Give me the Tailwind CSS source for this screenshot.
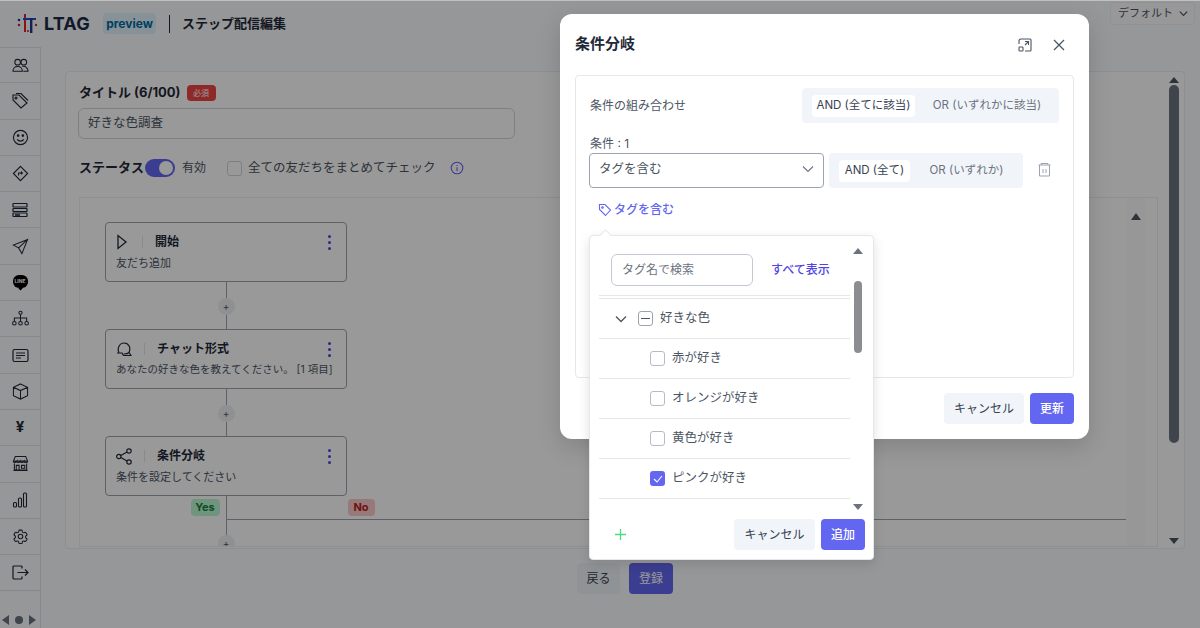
<!DOCTYPE html>
<html lang="ja">
<head>
  <meta charset="UTF-8" />
  <title>ステップ配信編集</title>
  <script src="https://cdn.jsdelivr.net/npm/@tailwindcss/browser@4"></script>
</head>
<body class="font-['Inter','Noto_Sans_CJK_JP',sans-serif] text-[#374151]">
<div class="relative w-[1200px] h-[628px] overflow-hidden bg-[#fbfcfd]">

  <!-- header -->
  <header class="h-[47px] flex items-center pl-[17px] pr-[5px]">
    <svg width="21" height="21" viewBox="0 0 21 21" class="mr-[6px]">
      <circle cx="2" cy="7" r="1.3" fill="#1e3a8a"/><circle cx="2" cy="12" r="1.3" fill="#e11d48"/>
      <rect x="7" y="1" width="2" height="18" fill="#dc2626"/>
      <rect x="6" y="5" width="13" height="2" fill="#1d4ed8"/>
      <rect x="13" y="5" width="2.4" height="15" fill="#1e3a8a"/>
      <circle cx="19" cy="12" r="1.2" fill="#dc2626"/><circle cx="11" cy="18" r="1.1" fill="#dc2626"/>
    </svg>
    <span class="text-[18px] font-bold text-[#1e2a4a] w-[59px] tracking-[0.2px]">LTAG</span>
    <span class="w-[53px] h-[21px] flex items-center justify-center bg-[#e0f2fe] rounded text-[12px] font-bold text-[#0369a1]">preview</span>
    <span class="w-px h-[18px] bg-[#1f2937] ml-[13px] mr-[12px]"></span>
    <span class="text-[13px] font-bold text-[#1f2937]">ステップ配信編集</span>
    <div class="ml-auto w-[85px] h-[23px] mb-[21px] border border-[#f1f2f4] rounded flex items-center pl-[7px] gap-[5px] text-[11px] text-[#4b5563] bg-[#fdfdfd]">
      デフォルト
      <svg width="11" height="11" viewBox="0 0 12 12" fill="none" stroke="#4b5563" stroke-width="1.4"><path d="M2 4l4 4 4-4"/></svg>
    </div>
  </header>

  <div class="flex">
    <!-- sidebar -->
    <aside class="w-[41px] h-[581px] border-r border-[#e0e3e7] flex flex-col">
      <div class="h-[36.3px] flex items-center justify-center border-y border-[#e0e3e7]">
        <svg width="17" height="17" viewBox="0 0 18 18" fill="none" stroke="#1f2937" stroke-width="1.1"><circle cx="6" cy="5.5" r="3"/><circle cx="12.5" cy="5.5" r="3"/><path d="M1 15c0-3 2-5 5-5s5 2 5 5zM11 10c3-.6 6 1.500 6 5h-5"/></svg>
      </div>
      <div class="h-[36.3px] flex items-center justify-center border-b border-[#e0e3e7]">
        <svg width="18" height="18" viewBox="0 0 18 18" fill="none" stroke="#1f2937" stroke-width="1.1"><path d="M2 3h6l8 8-6 5-8-8zM5 1.500h5l7 7"/><circle cx="5" cy="6" r="1"/></svg>
      </div>
      <div class="h-[36.3px] flex items-center justify-center border-b border-[#e0e3e7]">
        <svg width="17" height="17" viewBox="0 0 18 18" fill="none" stroke="#1f2937" stroke-width="1.2"><circle cx="9" cy="9" r="7.500"/><circle cx="6.500" cy="7" r=".8" fill="#1f2937"/><circle cx="11.500" cy="7" r=".8" fill="#1f2937"/><path d="M5.500 11c1.500 2.500 5.500 2.500 7 0"/></svg>
      </div>
      <div class="h-[36.3px] flex items-center justify-center border-b border-[#e0e3e7]">
        <svg width="17" height="17" viewBox="0 0 18 18" fill="none" stroke="#1f2937" stroke-width="1.2"><path d="M9 1.500L16.500 9 9 16.500 1.500 9z"/><path d="M7 11V8.500h4M9.500 7l1.500 1.500L9.500 10"/></svg>
      </div>
      <div class="h-[36.3px] flex items-center justify-center border-b border-[#e0e3e7]">
        <svg width="16" height="16" viewBox="0 0 16 16" fill="none" stroke="#1f2937" stroke-width="1.2"><rect x="1" y="1.500" width="14" height="3.500" rx=".5"/><rect x="1" y="6.500" width="14" height="3" rx=".5"/><rect x="1" y="11" width="14" height="3.500" rx=".5"/><path d="M3 13h5" stroke-width="1.600"/></svg>
      </div>
      <div class="h-[36.3px] flex items-center justify-center border-b border-[#e0e3e7]">
        <svg width="17" height="17" viewBox="0 0 18 18" fill="none" stroke="#1f2937" stroke-width="1.1"><path d="M16.500 1.500L1.500 7.500l5.500 3 3.500 6zM7 10.500l9.500-9"/></svg>
      </div>
      <div class="h-[36.3px] flex items-center justify-center border-b border-[#e0e3e7]">
        <div class="relative w-[15px] h-[13px] mb-[2px] rounded-[6px] bg-black flex items-center justify-center text-[5px] font-bold text-white leading-none">LINE<span class="absolute -bottom-[2px] left-[6px] w-[3px] h-[3px] bg-black rotate-45"></span></div>
      </div>
      <div class="h-[36.3px] flex items-center justify-center border-b border-[#e0e3e7]">
        <svg width="17" height="17" viewBox="0 0 18 18" fill="none" stroke="#1f2937" stroke-width="1.1"><circle cx="9" cy="3" r="1.700"/><circle cx="2.500" cy="14" r="1.900"/><circle cx="9" cy="14" r="1.900"/><circle cx="15.500" cy="14" r="1.900"/><path d="M9 5v7M2.500 12V8.500h13V12"/></svg>
      </div>
      <div class="h-[36.3px] flex items-center justify-center border-b border-[#e0e3e7]">
        <svg width="17" height="15" viewBox="0 0 17 15" fill="none" stroke="#1f2937" stroke-width="1.2"><rect x="1" y="1.500" width="15" height="12" rx="1.500"/><path d="M4 5h9M4 7.500h9M4 10h5"/></svg>
      </div>
      <div class="h-[36.3px] flex items-center justify-center border-b border-[#e0e3e7]">
        <svg width="17" height="17" viewBox="0 0 18 18" fill="none" stroke="#1f2937" stroke-width="1.1"><path d="M9 1l7.500 3.500v9L9 17l-7.500-3.500v-9zM1.500 4.500L9 8l7.500-3.500M9 8v9"/></svg>
      </div>
      <div class="h-[36.3px] flex items-center justify-center border-b border-[#e0e3e7] text-[15px] font-bold text-[#1f2937]">¥</div>
      <div class="h-[36.3px] flex items-center justify-center border-b border-[#e0e3e7]">
        <svg width="17" height="17" viewBox="0 0 18 18" fill="none" stroke="#1f2937" stroke-width="1.1"><path d="M3.500 1.500h11l2 5H1.500zM1.500 6.500c0 2 2.500 2 3.750 0 0 2 2.500 2 3.750 0 0 2 2.500 2 3.750 0 0 2 3.750 2 3.750 0M2.500 9v7h13V9M4.500 16v-5h3v5M10 11h3.500v3H10zM1.500 16.500h15"/></svg>
      </div>
      <div class="h-[36.3px] flex items-center justify-center border-b border-[#e0e3e7]">
        <svg width="16" height="16" viewBox="0 0 16 16" fill="none" stroke="#1f2937" stroke-width="1.1"><rect x="1.500" y="10.500" width="3" height="4.500" rx="1"/><rect x="6.500" y="6" width="3" height="9" rx="1"/><rect x="11.500" y="1" width="3" height="14" rx="1"/></svg>
      </div>
      <div class="h-[36.3px] flex items-center justify-center border-b border-[#e0e3e7]">
        <svg width="17" height="17" viewBox="0 0 24 24" fill="none" stroke="#1f2937" stroke-width="1.500"><path d="M9.600 3.900c.1-.5.500-.9 1.100-.9h2.600c.6 0 1 .4 1.100.9l.2 1.400c.1.400.4.700.7.900l.6.300c.4.200.8.200 1.100.1l1.300-.5c.5-.2 1.100 0 1.400.5l1.300 2.200c.3.500.2 1.100-.3 1.400l-1.100.9c-.3.200-.4.600-.4 1v.8c0 .4.100.7.400 1l1.100.9c.4.300.6.900.3 1.400l-1.300 2.200c-.3.500-.9.700-1.400.5l-1.300-.5c-.4-.1-.8-.1-1.100.1l-.6.300c-.4.200-.6.500-.7.900l-.2 1.400c-.1.500-.5.900-1.100.9h-2.600c-.6 0-1-.4-1.100-.9l-.2-1.400c-.1-.4-.4-.7-.7-.9l-.6-.3c-.4-.2-.8-.2-1.100-.1l-1.300.5c-.5.200-1.100 0-1.400-.5l-1.300-2.200c-.3-.5-.2-1.100.3-1.400l1.100-.9c.3-.2.400-.6.400-1v-.8c0-.4-.1-.7-.4-1l-1.100-.9c-.4-.3-.6-.9-.3-1.400l1.300-2.200c.3-.5.900-.7 1.400-.5l1.300.5c.4.100.8.100 1.100-.1l.6-.3c.4-.2.600-.5.700-.9z"/><circle cx="12" cy="12" r="3.200"/></svg>
      </div>
      <div class="h-[36.3px] flex items-center justify-center border-b border-[#e0e3e7]">
        <svg width="17" height="15" viewBox="0 0 17 15" fill="none" stroke="#1f2937" stroke-width="1.2"><path d="M10 3.500V2a1 1 0 0 0-1-1H2a1 1 0 0 0-1 1v11a1 1 0 0 0 1 1h7a1 1 0 0 0 1-1v-1.500M5.500 7.500H16M13 4.500l3 3-3 3"/></svg>
      </div>
    </aside>

    <main class="flex-1 pl-[24px] pr-[15px] pt-[24px]">
      <section class="h-[478px] border border-[#eceef1] rounded bg-white pl-[13px] pt-[13px] relative">
        <div class="flex items-center h-[16px] gap-[6px]">
          <span class="text-[13px] font-bold text-[#1f2937]">タイトル (6/100)</span>
          <span class="w-[29px] h-[16px] bg-[#ef4444] rounded-sm text-white text-[8px] flex items-center justify-center">必須</span>
        </div>
        <div class="w-[437px] h-[31px] mt-[7px] border border-[#d1d5db] rounded-md flex items-center pl-[9px] text-[12.5px] text-[#4b5563] -ml-px">好きな色調査</div>
        <div class="flex items-center h-[18px] mt-[20px]">
          <span class="text-[13px] font-bold text-[#1f2937] w-[66px]">ステータス</span>
          <span class="w-[30px] h-[18px] rounded-full bg-[#6366f1] flex items-center justify-end pr-[2px]"><span class="w-[14px] h-[14px] rounded-full bg-white"></span></span>
          <span class="text-[12px] text-[#4b5563] ml-[7px] w-[45px]">有効</span>
          <span class="w-[15px] h-[15px] border border-[#d1d5db] rounded-[3px]"></span>
          <span class="text-[12.5px] text-[#4b5563] ml-[6px]">全ての友だちをまとめてチェック</span>
          <svg width="14" height="14" viewBox="0 0 14 14" fill="none" stroke="#6366f1" stroke-width="1.1" class="ml-[14px]"><circle cx="7" cy="7" r="5.800"/><path d="M7 6.200v3.800M7 4v1"/></svg>
        </div>

        <!-- flow canvas -->
        <div class="relative w-[1079px] h-[350px] mt-[20px] border border-[#eceef1] overflow-hidden pl-[25px] pt-[24px]">
          <div class="w-[242px] flex flex-col items-center">
            <div class="w-full h-[60px] border border-[#9ca3af] rounded bg-white px-[10px] pt-[9px]">
              <div class="flex items-center h-[20px]">
                <svg width="12" height="16" viewBox="0 0 12 16" fill="none" stroke="#1f2937" stroke-width="1.300"><path d="M2 1.500v13l8-6.500z"/></svg>
                <span class="w-px h-[12px] bg-[#e5e7eb] ml-[14px] mr-[12px]"></span>
                <span class="text-[12px] font-bold text-[#1f2937]">開始</span>
                <span class="ml-auto mr-[5px] flex flex-col gap-[3px]"><i class="w-[3px] h-[3px] rounded-full bg-[#4f46e5]"></i><i class="w-[3px] h-[3px] rounded-full bg-[#4f46e5]"></i><i class="w-[3px] h-[3px] rounded-full bg-[#4f46e5]"></i></span>
              </div>
              <p class="text-[11px] text-[#4b5563] mt-[3px]">友だち追加</p>
            </div>
            <div class="relative w-px h-[47px] bg-[#9ca3af]">
              <span class="absolute left-[-8px] top-[16px] w-[17px] h-[17px] rounded-full bg-[#eef0f2] text-[10px] leading-[16px] text-center text-[#4b5563]">+</span>
            </div>
            <div class="w-full h-[60px] border border-[#9ca3af] rounded bg-white px-[10px] pt-[9px]">
              <div class="flex items-center h-[20px]">
                <svg width="16" height="16" viewBox="0 0 16 16" fill="none" stroke="#1f2937" stroke-width="1.200"><path d="M3 11.500C1 8 3 2 8 2s7 5 5 9.500l2 3H8c-1 0-1-1.500-2-2.500H1"/><path d="M13 11.500c-1 1-3 1.500-5 1.500"/></svg>
                <span class="w-px h-[12px] bg-[#e5e7eb] ml-[12px] mr-[12px]"></span>
                <span class="text-[12px] font-bold text-[#1f2937]">チャット形式</span>
                <span class="ml-auto mr-[5px] flex flex-col gap-[3px]"><i class="w-[3px] h-[3px] rounded-full bg-[#4f46e5]"></i><i class="w-[3px] h-[3px] rounded-full bg-[#4f46e5]"></i><i class="w-[3px] h-[3px] rounded-full bg-[#4f46e5]"></i></span>
              </div>
              <p class="text-[10.5px] text-[#4b5563] mt-[3px] whitespace-nowrap">あなたの好きな色を教えてください。 [1 項目]</p>
            </div>
            <div class="relative w-px h-[47px] bg-[#9ca3af]">
              <span class="absolute left-[-8px] top-[16px] w-[17px] h-[17px] rounded-full bg-[#eef0f2] text-[10px] leading-[16px] text-center text-[#4b5563]">+</span>
            </div>
            <div class="w-full h-[60px] border border-[#9ca3af] rounded bg-white px-[10px] pt-[9px]">
              <div class="flex items-center h-[20px]">
                <svg width="16" height="17" viewBox="0 0 16 17" fill="none" stroke="#1f2937" stroke-width="1.200"><circle cx="2.800" cy="8.500" r="2.200"/><circle cx="13" cy="3" r="2.200"/><circle cx="13" cy="14" r="2.200"/><path d="M4.800 7.500L11 4M4.800 9.500L11 13"/></svg>
                <span class="w-px h-[12px] bg-[#e5e7eb] ml-[12px] mr-[12px]"></span>
                <span class="text-[12px] font-bold text-[#1f2937]">条件分岐</span>
                <span class="ml-auto mr-[5px] flex flex-col gap-[3px]"><i class="w-[3px] h-[3px] rounded-full bg-[#4f46e5]"></i><i class="w-[3px] h-[3px] rounded-full bg-[#4f46e5]"></i><i class="w-[3px] h-[3px] rounded-full bg-[#4f46e5]"></i></span>
              </div>
              <p class="text-[11px] text-[#4b5563] mt-[3px]">条件を設定してください</p>
            </div>
            <div class="relative w-px h-[60px] bg-[#9ca3af]">
              <span class="absolute left-[-35px] top-[3px] w-[29px] h-[17px] rounded bg-[#bbf7d0] text-[11px] font-bold leading-[17px] text-center text-[#15803d]">Yes</span>
              <span class="absolute left-[122px] top-[3px] w-[27px] h-[17px] rounded bg-[#fecaca] text-[11px] font-bold leading-[17px] text-center text-[#b91c1c]">No</span>
              <span class="absolute left-0 top-[23px] w-[900px] h-px bg-[#9ca3af]"></span>
              <span class="absolute left-[-8px] top-[39px] w-[17px] h-[17px] rounded-full bg-[#eef0f2] text-[10px] leading-[16px] text-center text-[#4b5563]">+</span>
            </div>
          </div>
          <!-- canvas scrollbar -->
          <div class="absolute right-[11px] top-0 bottom-0 w-[20px] bg-[#fcfcfc] flex justify-center pt-[15px]">
            <span class="w-0 h-0 border-x-[5px] border-x-transparent border-b-[7px] border-b-[#4b5563]"></span>
          </div>
        </div>

        <!-- page scrollbar -->
        <div class="absolute right-0 top-0 bottom-0 w-[16px] flex flex-col items-center pt-[5px] pb-[4px] pr-[5px]">
          <span class="w-0 h-0 border-x-[5px] border-x-transparent border-b-[6px] border-b-[#4b5563]"></span>
          <span class="w-[10px] h-[358px] mt-[2px] rounded-full bg-[#6b7280]"></span>
          <span class="mt-auto w-0 h-0 border-x-[5px] border-x-transparent border-t-[6px] border-t-[#4b5563]"></span>
        </div>
      </section>

      <div class="flex justify-center gap-[9px] mt-[14px]">
        <button class="w-[43px] h-[31px] rounded bg-[#f1f5f9] text-[12px] text-[#374151]">戻る</button>
        <button class="w-[44px] h-[31px] rounded bg-[#6366f1] text-[12px] text-white">登録</button>
      </div>
    </main>
  </div>

  <!-- sidebar scroller -->
  <div class="absolute left-[2px] top-[615px] flex items-center gap-[6px]">
    <span class="w-0 h-0 border-y-[5px] border-y-transparent border-r-[7px] border-r-[#6b7280]"></span>
    <span class="w-[8px] h-[8px] rounded-full bg-[#6b7280]"></span>
    <span class="w-0 h-0 border-y-[5px] border-y-transparent border-l-[7px] border-l-[#6b7280]"></span>
  </div>

  <!-- dim overlay -->
  <div class="absolute inset-0 bg-black/40"></div>
  <div class="absolute inset-x-0 top-0 h-px bg-white/40"></div>

  <!-- modal -->
  <div class="absolute left-[560px] top-[14px] w-[529px] h-[425px] bg-white rounded-xl shadow-[0_8px_24px_rgba(0,0,0,0.15)] px-[15px]">
    <div class="h-[61px] flex items-center">
      <h2 class="text-[15px] font-bold text-[#1f2937]">条件分岐</h2>
      <svg width="14" height="14" viewBox="0 0 14 14" fill="none" stroke="#4b5563" stroke-width="1.100" class="ml-auto mr-[21px]"><path d="M3 1h9a1 1 0 0 1 1 1v10a1 1 0 0 1-1 1H7M1 6V3a2 2 0 0 1 2-2"/><rect x="1" y="9" width="4" height="4" rx=".7"/><path d="M7 7l3.500-3.500M7 3.500h3.500V7"/></svg>
      <svg width="12" height="12" viewBox="0 0 12 12" fill="none" stroke="#4b5563" stroke-width="1.300" class="mr-[9px]"><path d="M1 1l10 10M11 1L1 11"/></svg>
    </div>
    <div class="h-[303px] border border-[#e5e7eb] rounded px-[14px] pt-[12px]">
      <div class="flex items-center justify-between h-[35px]">
        <span class="text-[12px] text-[#4b5563]">条件の組み合わせ</span>
        <div class="w-[257px] h-[35px] mr-[0px] bg-[#f1f5f9] rounded flex items-center pl-[10px] text-[11.5px]">
          <span class="w-[103px] h-[22px] bg-white rounded flex items-center justify-center text-[#374151]">AND (全てに該当)</span>
          <span class="flex-1 text-center text-[#6b7280]">OR (いずれかに該当)</span>
        </div>
      </div>
      <p class="text-[12px] text-[#4b5563] mt-[13px] leading-[16px]">条件 : 1</p>
      <div class="flex items-center h-[35px] mt-[1px] -ml-px">
        <div class="w-[235px] h-[35px] border border-[#9ca3af] rounded flex items-center pl-[9px] pb-[3px] text-[12.5px] text-[#4b5563]">
          タグを含む
          <svg width="12" height="12" viewBox="0 0 12 12" fill="none" stroke="#6b7280" stroke-width="1.100" class="ml-auto mr-[9px]"><path d="M1 3.500l5 5 5-5"/></svg>
        </div>
        <div class="w-[194px] h-[35px] ml-[5px] bg-[#f1f5f9] rounded flex items-center pl-[10px] text-[11.5px]">
          <span class="w-[71px] h-[22px] bg-white rounded flex items-center justify-center text-[#374151]">AND (全て)</span>
          <span class="flex-1 text-center text-[#6b7280]">OR (いずれか)</span>
        </div>
        <svg width="13" height="15" viewBox="0 0 13 15" fill="none" stroke="#9ca3af" stroke-width="1" class="ml-[15px] mb-[2px]"><path d="M3 3V1.500h7V3M.5 3h12M1.500 3v11h10V3M5 7v4M8 7v4"/></svg>
      </div>
      <div class="flex items-center gap-[1px] h-[14px] mt-[15px] ml-[8px] text-[12px] text-[#6366f1] font-medium">
        <svg width="14" height="14" viewBox="0 0 14 14" fill="none" stroke="#6366f1" stroke-width="1.100" class="mr-[1px]"><path d="M1.500 1.500h5.500l5.500 5.500-5 5.500-6-6z"/><circle cx="4.500" cy="4.500" r=".8"/></svg>
        タグを含む
      </div>
    </div>
    <div class="flex justify-end gap-[6px] mt-[15px]">
      <button class="w-[80px] h-[31px] rounded bg-[#f1f5f9] text-[12px] text-[#374151]">キャンセル</button>
      <button class="w-[44px] h-[31px] rounded bg-[#6366f1] text-[12px] text-white font-medium">更新</button>
    </div>
  </div>

  <!-- tag dropdown -->
  <div class="absolute left-[589px] top-[235px] w-[285px] h-[325px] bg-white rounded border border-[#e5e7eb] shadow-[0_4px_12px_rgba(0,0,0,0.12)]">
    <span class="absolute left-[11px] -top-[5px] w-[9px] h-[9px] rotate-45 bg-white border-l border-t border-[#e5e7eb]"></span>
    <div class="flex items-center h-[59px] pl-[21px] pt-[9px]">
      <div class="w-[142px] h-[32px] border border-[#c3c9d4] rounded-md flex items-center pl-[10px] text-[12px] text-[#6b7280]">タグ名で検索</div>
      <span class="ml-[18px] text-[12px] font-medium text-[#4f46e5]">すべて表示</span>
    </div>
    <div class="w-[251px] ml-[9px] h-[4px] border-y border-[#e5e7eb]"></div>
    <div class="w-[251px] ml-[9px] text-[12.5px] text-[#4b5563]">
      <div class="h-[40px] flex items-center border-b border-[#e5e7eb] pl-[16px]">
        <svg width="12" height="12" viewBox="0 0 12 12" fill="none" stroke="#4b5563" stroke-width="1.300" class="mr-[11px]"><path d="M1 3.500l5 5 5-5"/></svg>
        <span class="w-[15px] h-[15px] border border-[#9ca3af] rounded-[3px] flex items-center justify-center mr-[7px]"><i class="w-[9px] h-[1.500px] bg-[#4b5563]"></i></span>
        好きな色
      </div>
      <div class="h-[40px] flex items-center border-b border-[#e5e7eb] pl-[51px]">
        <span class="w-[15px] h-[15px] border border-[#b6bcc7] rounded-[3px] mr-[7px]"></span>赤が好き
      </div>
      <div class="h-[40px] flex items-center border-b border-[#e5e7eb] pl-[51px]">
        <span class="w-[15px] h-[15px] border border-[#b6bcc7] rounded-[3px] mr-[7px]"></span>オレンジが好き
      </div>
      <div class="h-[40px] flex items-center border-b border-[#e5e7eb] pl-[51px]">
        <span class="w-[15px] h-[15px] border border-[#b6bcc7] rounded-[3px] mr-[7px]"></span>黄色が好き
      </div>
      <div class="h-[40px] flex items-center border-b border-[#e5e7eb] pl-[51px]">
        <span class="w-[15px] h-[15px] bg-[#6366f1] rounded-[3px] mr-[7px] flex items-center justify-center">
          <svg width="10" height="10" viewBox="0 0 10 10" fill="none" stroke="#fff" stroke-width="1.100"><path d="M1 5l3 3 5-6"/></svg>
        </span>ピンクが好き
      </div>
    </div>
    <!-- list scrollbar -->
    <div class="absolute left-[263px] top-[12px] w-[9px] h-[262px] flex flex-col items-center">
      <span class="w-0 h-0 border-x-[5px] border-x-transparent border-b-[6px] border-b-[#6b7280]"></span>
      <span class="w-[8px] h-[72px] mt-[27px] rounded-full bg-[#8b8d90]"></span>
      <span class="mt-auto w-0 h-0 border-x-[5px] border-x-transparent border-t-[6px] border-t-[#6b7280]"></span>
    </div>
    <div class="absolute inset-x-0 bottom-[9px] flex items-center pl-[24px] pr-[8px]">
      <svg width="13" height="13" viewBox="0 0 13 13" fill="none" stroke="#4ade80" stroke-width="1.300"><path d="M6.500 1v11M1 6.500h11"/></svg>
      <button class="ml-auto w-[81px] h-[31px] rounded bg-[#f1f5f9] text-[12px] text-[#374151]">キャンセル</button>
      <button class="ml-[6px] w-[44px] h-[31px] rounded bg-[#6366f1] text-[12px] text-white font-medium">追加</button>
    </div>
  </div>
</div>
</body>
</html>
